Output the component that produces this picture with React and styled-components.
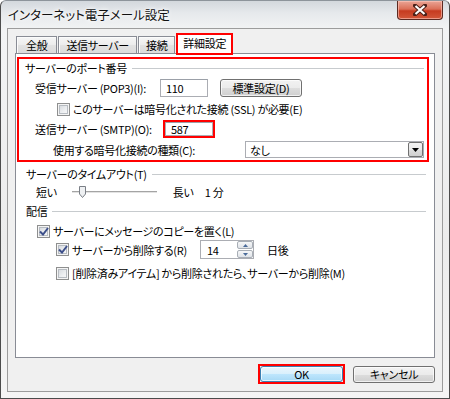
import React from 'react';
import styled, { createGlobalStyle } from 'styled-components';

const GlobalStyle = createGlobalStyle`
  html, body { margin: 0; padding: 0; background: #ffffff; }
  body {
    font-family: "Noto Sans CJK JP", "Noto Sans", sans-serif;
    font-size: 11px;
    letter-spacing: -0.3px;
    color: #000;
    font-feature-settings: "palt";
  }
  * { box-sizing: border-box; }
`;

const Window = styled.div`
  width: 450px;
  height: 399px;
  display: flex;
  flex-direction: column;
  border: 1px solid #4c4c4c;
  border-top-color: #8d949b;
  border-radius: 6px 6px 0 0;
  background: linear-gradient(180deg, #d3d8dd 0px, #e6e9ec 12px, #f3f4f5 30px, #ececec 60%, #f5f5f5 100%);
  padding: 0 6px 6px 6px;
`;

const TitleBar = styled.div`
  height: 27px;
  display: flex;
  justify-content: space-between;
  flex-shrink: 0;
`;

const Title = styled.div`
  padding: 6px 0 0 1px;
  font-size: 12.5px;
  letter-spacing: 0;
  line-height: 16px;
  color: #111;
  text-shadow: 0 0 6px #fff, 0 0 3px #fff;
`;

const CloseButton = styled.div`
  width: 46px;
  height: 19px;
  border: 1px solid #5b2a22;
  border-top: none;
  border-radius: 0 0 4px 4px;
  background: linear-gradient(180deg, #eaa596 0%, #db6f58 45%, #c63b20 55%, #d2573a 100%);
  box-shadow: inset 0 0 0 1px rgba(255, 200, 190, 0.6);
  display: flex;
  align-items: center;
  justify-content: center;
`;

const Client = styled.div`
  flex: 1;
  display: flex;
  flex-direction: column;
  border: 1px solid #9c9c9c;
  background: #f0f0f0;
  padding: 4px 7px 7px 7px;
`;

const TabRow = styled.div`
  display: flex;
  align-items: flex-end;
  height: 20px;
  padding-left: 1px;
  gap: 1px;
`;

const Tab = styled.div`
  position: relative;
  z-index: ${p => (p.$active ? 2 : 1)};
  height: ${p => (p.$active ? 22 : 17)}px;
  margin-bottom: ${p => (p.$active ? -2 : 0)}px;
  padding: 0 ${p => p.$pad}px;
  display: flex;
  align-items: center;
  padding-bottom: ${p => (p.$active ? 2 : 0)}px;
  border: ${p => (p.$active ? '2px solid #ff0000' : '1px solid #898c95')};
  border-bottom: ${p => (p.$active ? '2px solid #ff0000' : 'none')};
  background: ${p => (p.$active ? '#ffffff' : 'linear-gradient(180deg, #f6f6f6 0%, #ececec 50%, #e2e2e2 51%, #dcdcdc 100%)')};
  box-shadow: ${p => (p.$active ? 'none' : 'inset 1px 1px 0 #fbfbfb')};
  white-space: nowrap;
`;

const Panel = styled.div`
  flex: 1;
  border: 1px solid #898c95;
  background: #ffffff;
  display: flex;
  flex-direction: column;
  padding: 3px 5px 0 1px;
`;

const Highlight = styled.div`
  border: 2px solid #ff0000;
  display: flex;
  flex-direction: column;
  padding: 0 0 2px 0;
`;

const GroupHeader = styled.div`
  display: flex;
  align-items: center;
  height: 18px;
  padding-left: ${p => p.$indent}px;
  padding-right: 3px;
  margin-top: ${p => p.$top || 0}px;
  white-space: nowrap;
  &::after {
    content: "";
    flex: 1;
    border-top: 1px solid #c7cbce;
    margin-left: 5px;
    margin-top: 1px;
  }
`;

const Row = styled.div`
  display: flex;
  align-items: center;
  height: ${p => p.$h}px;
  margin-top: ${p => p.$top || 0}px;
  padding-left: ${p => p.$indent}px;
  white-space: nowrap;
`;

const Label = styled.span`
  width: ${p => (p.$w ? `${p.$w}px` : 'auto')};
  flex-shrink: 0;
  margin-left: ${p => p.$left || 0}px;
`;

const TextBox = styled.div`
  width: ${p => p.$w}px;
  height: ${p => p.$h || 18}px;
  border: 1px solid #abadb3;
  border-top-color: #9ba0a8;
  background: #fff;
  display: flex;
  align-items: center;
  padding-left: 5px;
  flex-shrink: 0;
`;

const RedFrame = styled.div`
  border: 2px solid #ff0000;
  display: flex;
  flex-shrink: 0;
`;

const Button = styled.div`
  width: ${p => p.$w}px;
  height: ${p => p.$h || 17}px;
  margin-left: ${p => p.$left || 0}px;
  border: 1px solid ${p => (p.$default ? '#3c7fb1' : '#707070')};
  border-radius: 3px;
  background: ${p =>
    p.$default
      ? 'linear-gradient(180deg, #eaf6fd 0%, #d9f0fc 50%, #bee6fd 51%, #a7d9f5 100%)'
      : 'linear-gradient(180deg, #f2f2f2 0%, #ebebeb 50%, #dddddd 51%, #cfcfcf 100%)'};
  box-shadow: inset 0 0 0 1px rgba(255, 255, 255, 0.7);
  display: flex;
  align-items: center;
  justify-content: center;
  flex-shrink: 0;
`;

const CheckBox = styled.span`
  width: 13px;
  height: 13px;
  flex-shrink: 0;
  border: 1px solid #8e8f8f;
  background: linear-gradient(135deg, #cfd3d8 0%, #eef0f2 60%, #fafafa 100%);
  box-shadow: inset 0 0 0 1px #f4f4f4, inset 0 0 0 2px #b7bcc2;
  display: flex;
  align-items: center;
  justify-content: center;
  margin-right: 3px;
`;

const SelectBox = styled.div`
  width: 179px;
  height: 17px;
  margin-left: auto;
  margin-right: 3px;
  border: 1px solid #abadb3;
  background: #fff;
  display: flex;
  align-items: center;
  padding-left: 4px;
`;

const SelectArrow = styled.div`
  margin-left: auto;
  width: 15px;
  height: 15px;
  border: 1px solid #707070;
  border-radius: 2px;
  background: linear-gradient(180deg, #f2f2f2 0%, #ebebeb 50%, #dddddd 51%, #cfcfcf 100%);
  display: flex;
  align-items: center;
  justify-content: center;
`;

const SliderTrack = styled.div`
  position: relative;
  width: 85px;
  height: 3px;
  margin-left: 15px;
  margin-right: 16px;
  border-top: 1px solid #a4a4a4;
  border-bottom: 1px solid #ffffff;
  background: #e3e3e3;
  flex-shrink: 0;
`;

const SliderThumb = styled.svg`
  position: absolute;
  left: 7px;
  top: -6px;
`;

const SpinBox = styled.div`
  width: 54px;
  height: 19px;
  border: 1px solid #abadb3;
  background: #fff;
  display: flex;
  align-items: center;
  padding-left: 6px;
  flex-shrink: 0;
`;

const SpinButtons = styled.div`
  margin-left: auto;
  width: 16px;
  height: 17px;
  display: flex;
  flex-direction: column;
  gap: 1px;
`;

const SpinHalf = styled.div`
  flex: 1;
  border: 1px solid #a8aeb6;
  border-radius: 2px;
  background: linear-gradient(180deg, #f6f7f8, #dfe3e8);
  display: flex;
  align-items: center;
  justify-content: center;
`;

const Footer = styled.div`
  display: flex;
  justify-content: flex-end;
  align-items: center;
  height: 20px;
  margin-top: 6px;
  gap: 8px;
`;

const Tick = () => (
  <svg width="10" height="9" viewBox="0 0 10 9">
    <path d="M1 4.5 L4 7.5 L9 1" fill="none" stroke="#3d4f8a" strokeWidth="2" />
  </svg>
);

const Check = ({ checked }) => <CheckBox>{checked && <Tick />}</CheckBox>;

const DownTriangle = ({ color = '#000', w = 7, h = 4 }) => (
  <svg width={w} height={h} viewBox={`0 0 ${w} ${h}`}>
    <path d={`M0 0 L${w} 0 L${w / 2} ${h} Z`} fill={color} />
  </svg>
);

const UpTriangle = ({ color = '#4a6b9a' }) => (
  <svg width="5" height="3" viewBox="0 0 5 3">
    <path d="M0 3 L5 3 L2.5 0 Z" fill={color} />
  </svg>
);

export default function App() {
  return (
    <>
      <GlobalStyle />
      <Window>
        <TitleBar>
          <Title>インターネット電子メール設定</Title>
          <CloseButton>
            <svg width="14" height="12" viewBox="0 0 14 12">
              <path d="M2 1.5 L12 10.5 M12 1.5 L2 10.5" stroke="#4a2018" strokeWidth="4" strokeLinecap="square" />
              <path d="M2.5 2 L11.5 10 M11.5 2 L2.5 10" stroke="#ffffff" strokeWidth="2.2" />
            </svg>
          </CloseButton>
        </TitleBar>
        <Client>
          <TabRow>
            <Tab $pad={9}>全般</Tab>
            <Tab $pad={7}>送信サーバー</Tab>
            <Tab $pad={7}>接続</Tab>
            <Tab $pad={5} $active>詳細設定</Tab>
          </TabRow>
          <Panel>
            <Highlight>
              <GroupHeader $indent={6}>サーバーのポート番号</GroupHeader>
              <Row $h={20} $top={1} $indent={16}>
                <Label $w={125}>受信サーバー (POP3)(I):</Label>
                <TextBox $w={48}>110</TextBox>
                <Button $w={82} $h={18} $left={12}>標準設定(D)</Button>
              </Row>
              <Row $h={22} $indent={38}>
                <Check />
                <Label>このサーバーは暗号化された接続 (SSL) が必要(E)</Label>
              </Row>
              <Row $h={18} $indent={16}>
                <Label $w={128}>送信サーバー (SMTP)(O):</Label>
                <RedFrame>
                  <TextBox $w={48} $h={14}>587</TextBox>
                </RedFrame>
              </Row>
              <Row $h={17} $top={3} $indent={34}>
                <Label>使用する暗号化接続の種類(C):</Label>
                <SelectBox>
                  なし
                  <SelectArrow>
                    <DownTriangle />
                  </SelectArrow>
                </SelectBox>
              </Row>
            </Highlight>
            <GroupHeader $indent={9} $top={3}>サーバーのタイムアウト(T)</GroupHeader>
            <Row $h={18} $indent={19}>
              <Label>短い</Label>
              <SliderTrack>
                <SliderThumb width="7" height="12" viewBox="0 0 7 12">
                  <path d="M0.5 0.5 H6.5 V8 L3.5 11.5 L0.5 8 Z" fill="#eef0f2" stroke="#7a7f86" />
                </SliderThumb>
              </SliderTrack>
              <Label $w={32}>長い</Label>
              <Label>1 分</Label>
            </Row>
            <GroupHeader $indent={9} $top={1}>配信</GroupHeader>
            <Row $h={18} $top={2} $indent={20}>
              <Check checked />
              <Label>サーバーにメッセージのコピーを置く(L)</Label>
            </Row>
            <Row $h={19} $indent={39}>
              <Check checked />
              <Label $w={128}>サーバーから削除する(R)</Label>
              <SpinBox>
                14
                <SpinButtons>
                  <SpinHalf><UpTriangle /></SpinHalf>
                  <SpinHalf><DownTriangle color="#4a6b9a" w={5} h={3} /></SpinHalf>
                </SpinButtons>
              </SpinBox>
              <Label $left={13}>日後</Label>
            </Row>
            <Row $h={18} $top={5} $indent={39}>
              <Check />
              <Label>[削除済みアイテム] から削除されたら、サーバーから削除(M)</Label>
            </Row>
          </Panel>
          <Footer>
            <RedFrame>
              <Button $w={83} $h={16} $default>OK</Button>
            </RedFrame>
            <Button $w={82}>キャンセル</Button>
          </Footer>
        </Client>
      </Window>
    </>
  );
}
